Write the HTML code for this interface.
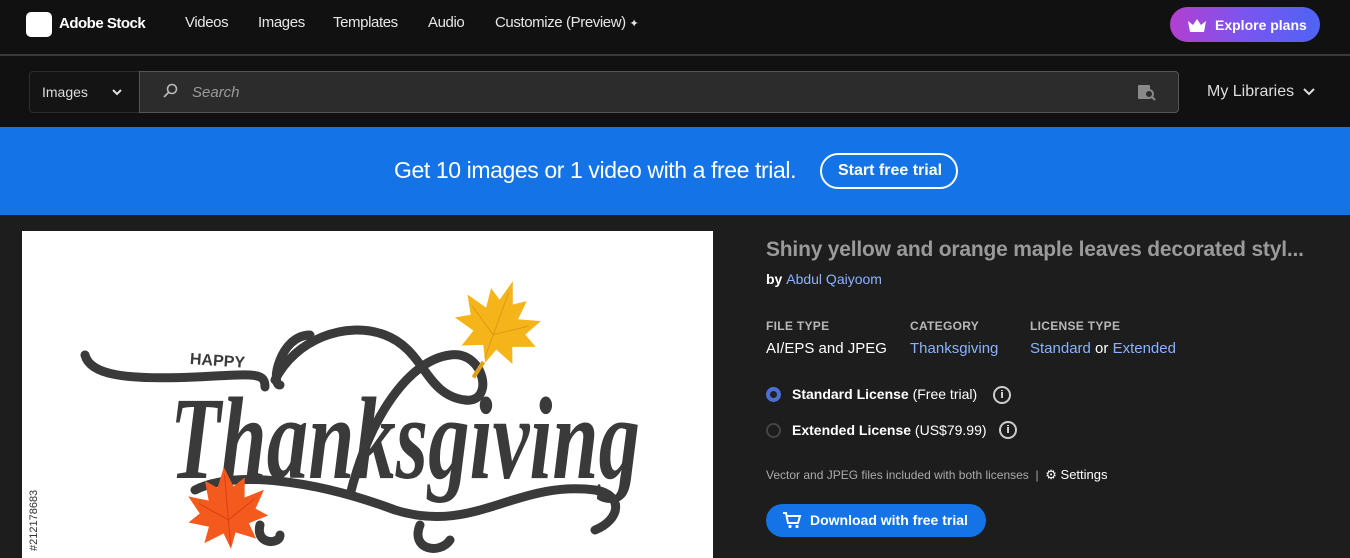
<!DOCTYPE html>
<html><head><meta charset="utf-8"><style>
*{margin:0;padding:0;box-sizing:border-box}
body{width:1350px;height:558px;overflow:hidden;background:#1d1d1d;font-family:"Liberation Sans",sans-serif;color:#fff;position:relative}
.hdr{position:absolute;left:0;top:0;width:1350px;height:56px;background:#111;border-bottom:2px solid #3a3a3a}
.logo{position:absolute;left:26px;top:12px;width:26px;height:25px;background:#fff;border-radius:5px}
.brand{position:absolute;left:59px;top:15px;font-size:15px;font-weight:bold;letter-spacing:-.5px}
.nav{position:absolute;top:14px;font-size:15px;color:#e6e6e6;letter-spacing:-.4px}
.plans{position:absolute;left:1170px;top:7px;width:150px;height:35px;border-radius:18px;background:linear-gradient(90deg,#b23fd0,#7a55f0 50%,#4e64f5);font-size:14px;font-weight:bold;padding:10px 0 0 45px}
.srow{position:absolute;left:0;top:56px;width:1350px;height:71px;background:#111}
.dd{position:absolute;left:29px;top:15px;width:111px;height:42px;border:1px solid #2d2d2d;border-right:none;border-radius:4px 0 0 4px;background:#141414;font-size:14px;padding:12px 0 0 12px;color:#ddd}
.inp{position:absolute;left:139px;top:15px;width:1040px;height:42px;background:#2c2c2c;border:1px solid #555;border-radius:0 4px 4px 0}
.ban{position:absolute;left:0;top:127px;width:1350px;height:88px;background:#1473e6}
.det{position:absolute;left:766px}
.lab{font-size:12px;font-weight:bold;color:#b8b8b8;letter-spacing:.3px}
.lnk{color:#8ab4ff}
</style></head><body>
<div class="hdr">
<div class="logo"></div><div class="brand">Adobe Stock</div>
<div class="nav" style="left:185px">Videos</div>
<div class="nav" style="left:258px">Images</div>
<div class="nav" style="left:333px">Templates</div>
<div class="nav" style="left:428px">Audio</div>
<div class="nav" style="left:495px">Customize (Preview) <span style="font-size:11px">✦</span></div>
<div class="plans"><svg style="position:absolute;left:17px;top:11px" width="20" height="14" viewBox="0 0 20 14"><path d="M1 3l5 4 4-6 4 6 5-4-2 11H3z" fill="#fff"/></svg>Explore plans</div>
</div>
<div class="srow">
<div class="dd">Images<svg style="position:absolute;left:82px;top:17px" width="10" height="7"><path d="M1 1l4 4 4-4" stroke="#ddd" stroke-width="2" fill="none"/></svg></div>
<div class="inp">
<svg style="position:absolute;left:22px;top:11px" width="16" height="16"><circle cx="10" cy="6" r="4.5" stroke="#bbb" stroke-width="1.6" fill="none"/><path d="M7 9l-5 5" stroke="#bbb" stroke-width="1.6"/></svg>
<span style="position:absolute;left:52px;top:12px;font-size:15px;font-style:italic;color:#9a9a9a">Search</span>
<svg style="position:absolute;left:997px;top:10px" width="20" height="20"><rect x="1" y="3" width="12" height="14" rx="1" fill="#8a8a8a"/><circle cx="12" cy="12" r="4" stroke="#8a8a8a" stroke-width="2" fill="#2c2c2c"/><path d="M15 15l3 3" stroke="#8a8a8a" stroke-width="2"/></svg>
</div>
<div style="position:absolute;left:1207px;top:27px;font-size:16px;color:#ddd">My Libraries <svg width="12" height="8" style="margin-left:4px"><path d="M1 1l5 5 5-5" stroke="#ddd" stroke-width="2" fill="none"/></svg></div>
</div>
<div class="ban">
<div style="position:absolute;left:394px;top:30px;font-size:23px;letter-spacing:-.4px">Get 10 images or 1 video with a free trial.</div>
<div style="position:absolute;left:820px;top:26px;width:138px;height:36px;border:2px solid #fff;border-radius:18px;font-size:16px;font-weight:bold;padding:7px 0 0 16px">Start free trial</div>
</div>
<div style="position:absolute;left:22px;top:231px;width:691px;height:327px;background:#fff;overflow:hidden">
<svg width="691" height="327" viewBox="22 231 691 327">
<g fill="none" stroke="#3a3a3a" stroke-width="9" stroke-linecap="round">
<path d="M85 355c5 20 40 25 110 22c60-3 70-5 70 10"/>
<path d="M280 385c-10 0 0-50 30-50"/>
<path d="M275 380c20-40 70-60 110-45c40 15 40 60 80 65c30 4 20-50-15-45c-40 5-80 60-100 140"/>
<path d="M195 490c40-20 120-10 200 20c80 25 120-30 200-20c30 5 25 30 0 40"/>
<path d="M260 525c-5 20 20 20 20 10M420 525c-10 25 20 30 30 15"/>
</g>
<text x="170" y="478" font-family="Liberation Serif,serif" font-style="italic" font-weight="bold" font-size="118" fill="#3a3a3a" textLength="470" lengthAdjust="spacingAndGlyphs">Thanksgiving</text>
<text x="190" y="366" font-family="Liberation Sans,sans-serif" font-weight="bold" font-size="16" fill="#3a3a3a" transform="rotate(4 220 360)">HAPPY</text>
<g transform="translate(495 330) rotate(20)">
<path d="M0 -52 L8 -30 L20 -38 L18 -18 L40 -24 L30 -6 L44 2 L22 10 L28 26 L8 18 L2 34 L-6 18 L-26 26 L-20 8 L-42 2 L-28 -6 L-38 -24 L-16 -18 L-18 -38 L-6 -30 Z" fill="#f4b41a"/>
<path d="M0 34 L-4 52" stroke="#e0a010" stroke-width="4"/>
<path d="M0 -40 L0 30 M0 5 L30 -15 M0 5 L-30 -15" stroke="#e09a10" stroke-width="1"/>
</g>
<g transform="translate(228 515) rotate(-5)">
<path d="M0 -48 L8 -28 L20 -36 L18 -16 L38 -22 L28 -4 L40 4 L20 10 L26 26 L6 18 L0 34 L-6 18 L-26 26 L-20 10 L-40 4 L-28 -4 L-38 -22 L-18 -16 L-20 -36 L-8 -28 Z" fill="#f45a1e"/>
<path d="M0 -40 L0 30 M0 5 L28 -14 M0 5 L-28 -14" stroke="#d84010" stroke-width="1"/>
</g>
</svg>
<div style="position:absolute;left:6px;top:320px;transform:rotate(-90deg);transform-origin:left top;font-size:11px;color:#333;white-space:nowrap">#212178683</div>
</div>
<div class="det" style="top:238px;font-size:21px;font-weight:bold;color:#9a9a9a;letter-spacing:-.2px">Shiny yellow and orange maple leaves decorated styl...</div>
<div class="det" style="top:271px;font-size:14px;font-weight:bold">by <span class="lnk" style="font-weight:normal">Abdul Qaiyoom</span></div>
<div class="det lab" style="top:319px">FILE TYPE</div>
<div class="det lab" style="top:319px;left:910px">CATEGORY</div>
<div class="det lab" style="top:319px;left:1030px">LICENSE TYPE</div>
<div class="det" style="top:340px;font-size:15px">AI/EPS and JPEG</div>
<div class="det lnk" style="top:340px;left:910px;font-size:15px">Thanksgiving</div>
<div class="det" style="top:340px;left:1030px;font-size:15px"><span class="lnk">Standard</span> or <span class="lnk">Extended</span></div>
<div class="det" style="top:387px;width:15px;height:15px;border-radius:50%;border:4px solid #4a6fd0;background:#222"></div>
<div class="det" style="top:386px;left:792px;font-size:14px"><b>Standard License</b> (Free trial)</div>
<div class="det" style="top:386px;left:993px;width:18px;height:18px;border:2px solid #ccc;border-radius:50%;font-size:11px;font-weight:bold;text-align:center;line-height:14px">i</div>
<div class="det" style="top:423px;width:15px;height:15px;border-radius:50%;border:2px solid #444"></div>
<div class="det" style="top:422px;left:792px;font-size:14px"><b>Extended License</b> (US$79.99)</div>
<div class="det" style="top:421px;left:999px;width:18px;height:18px;border:2px solid #ccc;border-radius:50%;font-size:11px;font-weight:bold;text-align:center;line-height:14px">i</div>
<div class="det" style="top:467px;font-size:12px;color:#aaa">Vector and JPEG files included with both licenses &nbsp;| &nbsp;<span style="color:#fff;font-size:13px">⚙ Settings</span></div>
<div class="det" style="top:504px;width:220px;height:33px;border-radius:17px;background:#1473e6;font-size:14px;font-weight:bold;padding:8px 0 0 44px">
<svg style="position:absolute;left:16px;top:7px" width="20" height="18"><path d="M1 2h3l2 10h10l2-7H5" stroke="#fff" stroke-width="2" fill="none"/><circle cx="8" cy="15.5" r="1.6" fill="#fff"/><circle cx="15" cy="15.5" r="1.6" fill="#fff"/></svg>Download with free trial</div>
</body></html>
